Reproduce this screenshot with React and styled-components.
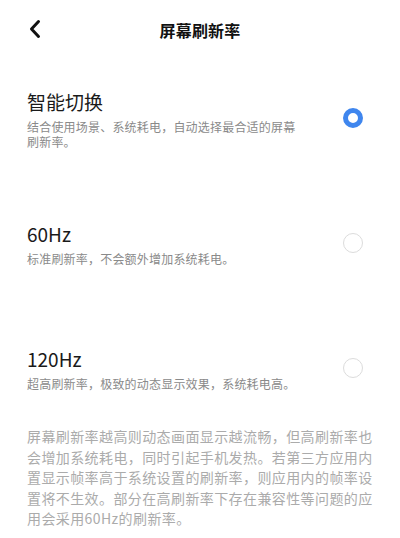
import React, { useState } from 'react';
import styled, { createGlobalStyle } from 'styled-components';

const GlobalStyle = createGlobalStyle`
  html, body {
    margin: 0;
    padding: 0;
    background: #fff;
  }
  body {
    font-family: "Noto Sans CJK SC", "Noto Sans", sans-serif;
  }
`;

const Page = styled.div`
  width: 400px;
  min-height: 538px;
  background: #fff;
  display: flex;
  flex-direction: column;
`;

const Header = styled.header`
  height: 60px;
  display: flex;
  align-items: center;
  justify-content: center;
  position: relative;
`;

const BackButton = styled.button`
  position: absolute;
  left: 22px;
  top: 16px;
  width: 26px;
  height: 26px;
  padding: 0;
  border: none;
  background: none;
  display: flex;
  align-items: center;
  justify-content: center;
  cursor: pointer;
`;

const Title = styled.h1`
  margin: 0;
  font-size: 16px;
  font-weight: 700;
  color: #111;
  letter-spacing: 0.2px;
`;

const OptionList = styled.div`
  display: flex;
  flex-direction: column;
  padding: 0 37px 0 27px;
`;

const Option = styled.div`
  display: flex;
  align-items: center;
  justify-content: space-between;
  margin-top: ${({ $space }) => $space}px;
  cursor: pointer;
`;

const OptionText = styled.div`
  display: flex;
  flex-direction: column;
  gap: 5px;
`;

const OptionTitle = styled.div`
  font-size: 19px;
  line-height: 24px;
  color: #1a1a1a;
`;

const OptionDesc = styled.div`
  font-size: 12px;
  line-height: 15px;
  letter-spacing: 0.2px;
  color: #8a8a8a;
  max-width: 275px;
`;

const Radio = styled.span`
  width: 20px;
  height: 20px;
  box-sizing: border-box;
  border-radius: 50%;
  flex-shrink: 0;
  margin-top: -3px;
  border: ${({ $checked }) => ($checked ? '5px solid #3f86ee' : '1.5px solid #dcdcdc')};
`;

const Note = styled.p`
  margin: 35px 23px 0 27px;
  font-size: 14px;
  line-height: 20.5px;
  letter-spacing: 0.4px;
  color: #ababab;
`;

const options = [
  { id: 'auto', space: 30, title: '智能切换', desc: '结合使用场景、系统耗电，自动选择最合适的屏幕刷新率。' },
  { id: '60', space: 73, title: '60Hz', desc: '标准刷新率，不会额外增加系统耗电。' },
  { id: '120', space: 81, title: '120Hz', desc: '超高刷新率，极致的动态显示效果，系统耗电高。' },
];

export default function App() {
  const [selected, setSelected] = useState('auto');

  return (
    <Page>
      <GlobalStyle />
      <Header>
        <BackButton aria-label="返回">
          <svg width="14" height="20" viewBox="0 0 14 20">
            <path d="M10.5 2.5 L3.5 10 L10.5 17.5" fill="none" stroke="#111" strokeWidth="3" strokeLinecap="round" strokeLinejoin="round" />
          </svg>
        </BackButton>
        <Title>屏幕刷新率</Title>
      </Header>
      <OptionList>
        {options.map((o) => (
          <Option key={o.id} $space={o.space} onClick={() => setSelected(o.id)}>
            <OptionText>
              <OptionTitle>{o.title}</OptionTitle>
              <OptionDesc>{o.desc}</OptionDesc>
            </OptionText>
            <Radio $checked={selected === o.id} />
          </Option>
        ))}
      </OptionList>
      <Note>
        屏幕刷新率越高则动态画面显示越流畅，但高刷新率也会增加系统耗电，同时引起手机发热。若第三方应用内置显示帧率高于系统设置的刷新率，则应用内的帧率设置将不生效。部分在高刷新率下存在兼容性等问题的应用会采用60Hz的刷新率。
      </Note>
    </Page>
  );
}
